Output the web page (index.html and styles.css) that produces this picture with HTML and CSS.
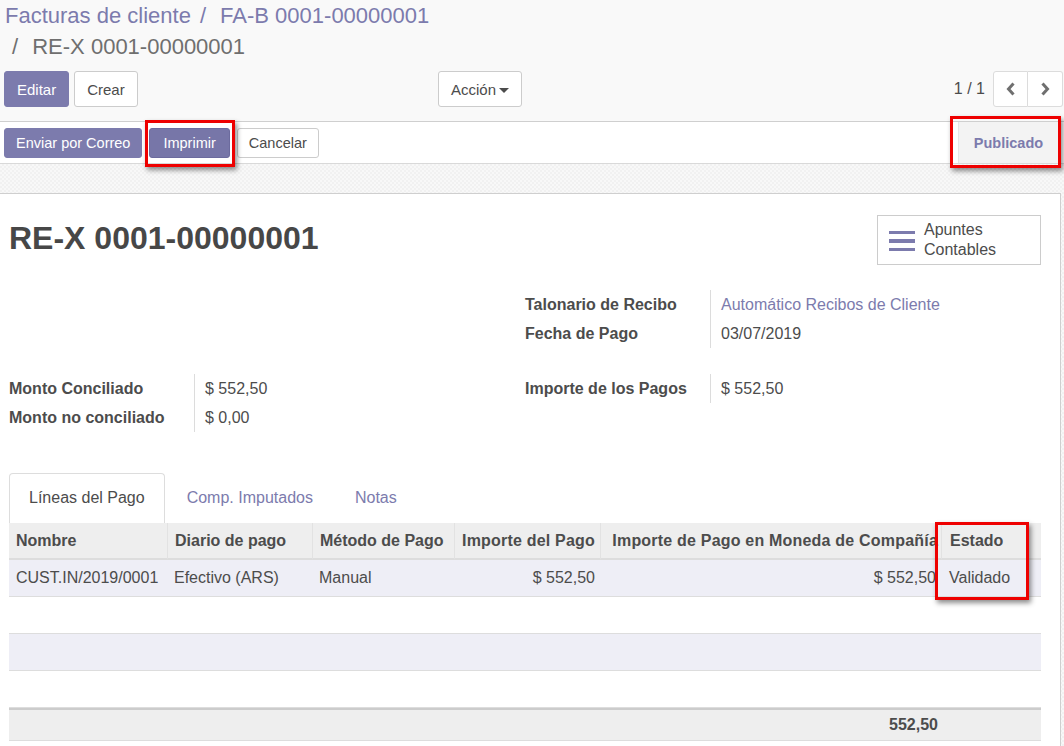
FILE: index.html
```html
<!DOCTYPE html>
<html lang="es">
<head>
<meta charset="utf-8">
<title>RE-X 0001-00000001</title>
<link rel="stylesheet" href="styles.css">
</head>
<body>
<div class="page">
  <header class="cp">
    <ol class="breadcrumb"><li><a href="#">Facturas de cliente</a></li><li><a href="#">FA-B 0001-00000001</a></li><li class="active">RE-X 0001-00000001</li></ol>
    <div class="cp-bottom">
      <div class="cp-buttons">
        <button class="btn btn-primary">Editar</button>
        <button class="btn btn-secondary">Crear</button>
      </div>
      <div class="cp-sidebar">
        <button class="btn btn-secondary">Acción<span class="caret"></span></button>
      </div>
      <div class="pager">
        <span class="pager-value">1 / 1</span>
        <div class="pager-buttons">
          <button class="btn pager-btn" aria-label="Anterior"><svg width="10" height="14" viewBox="0 0 10 14"><polyline points="7.5,1.5 2.5,7 7.5,12.5" fill="none" stroke="#6f6f6f" stroke-width="3" stroke-linejoin="miter"/></svg></button>
          <button class="btn pager-btn" aria-label="Siguiente"><svg width="10" height="14" viewBox="0 0 10 14"><polyline points="2.5,1.5 7.5,7 2.5,12.5" fill="none" stroke="#6f6f6f" stroke-width="3" stroke-linejoin="miter"/></svg></button>
        </div>
      </div>
    </div>
  </header>

  <div class="statusbar">
    <div class="sb-buttons">
      <button class="btn btn-primary btn-sm">Enviar por Correo</button>
      <button class="btn btn-primary btn-sm btn-print">Imprimir</button>
      <button class="btn btn-secondary btn-sm">Cancelar</button>
    </div>
    <div class="sb-status"><span class="status-active">Publicado</span></div>
  </div>

  <div class="sheet-bg">
    <div class="sheet">
      <div class="sheet-head">
        <h1 class="title">RE-X 0001-00000001</h1>
        <button class="btn-box">
          <span class="burger"><i></i><i></i><i></i></span>
          <span class="box-text">Apuntes<br>Contables</span>
        </button>
      </div>

      <div class="group group-first">
        <div class="gcol"></div>
        <div class="gcol">
          <div class="fields">
            <div class="lbl">Talonario de Recibo</div>
            <div class="val"><a href="#">Automático Recibos de Cliente</a></div>
            <div class="lbl">Fecha de Pago</div>
            <div class="val">03/07/2019</div>
          </div>
        </div>
      </div>

      <div class="group group-second">
        <div class="gcol">
          <div class="fields">
            <div class="lbl">Monto Conciliado</div>
            <div class="val">$ 552,50</div>
            <div class="lbl">Monto no conciliado</div>
            <div class="val">$ 0,00</div>
          </div>
        </div>
        <div class="gcol">
          <div class="fields">
            <div class="lbl">Importe de los Pagos</div>
            <div class="val">$ 552,50</div>
          </div>
        </div>
      </div>

      <ul class="tabs">
        <li class="tab active">Líneas del Pago</li>
        <li class="tab"><a href="#">Comp. Imputados</a></li>
        <li class="tab"><a href="#">Notas</a></li>
      </ul>

      <table class="lines">
        <colgroup>
          <col class="c1"><col class="c2"><col class="c3"><col class="c4"><col class="c5"><col class="c6">
        </colgroup>
        <thead>
          <tr>
            <th>Nombre</th>
            <th>Diario de pago</th>
            <th>Método de Pago</th>
            <th class="num h-pago">Importe del Pago</th>
            <th class="num h-moneda">Importe de Pago en Moneda de Compañía</th>
            <th class="last">Estado</th>
          </tr>
        </thead>
        <tbody>
          <tr class="odd">
            <td>CUST.IN/2019/0001</td>
            <td>Efectivo (ARS)</td>
            <td>Manual</td>
            <td class="num">$ 552,50</td>
            <td class="num">$ 552,50</td>
            <td class="last">Validado</td>
          </tr>
          <tr class="empty"><td colspan="6"></td></tr>
          <tr class="empty odd"><td colspan="6"></td></tr>
          <tr class="empty"><td colspan="6"></td></tr>
        </tbody>
        <tfoot>
          <tr>
            <td></td><td></td><td></td><td></td>
            <td class="num total">552,50</td>
            <td></td>
          </tr>
        </tfoot>
      </table>
    </div>
  </div>

  <div class="mark mark-imprimir"></div>
  <div class="mark mark-publicado"></div>
  <div class="mark mark-estado"></div>
</div>
</body>
</html>
```

FILE: styles.css
```css
* { box-sizing: border-box; }
html, body { margin: 0; padding: 0; }
body {
  font-family: "Liberation Sans", Arial, Helvetica, sans-serif;
  font-size: 16px;
  color: #4c4c4c;
  background: #fff;
}
a { color: #7c7bad; text-decoration: none; }

.page { position: relative; width: 1064px; height: 746px; overflow: hidden; }

/* control panel */
.cp {
  background: #f9f9f9;
  border-bottom: 1px solid #cfcfcf;
  padding-bottom: 14px;
}
.breadcrumb {
  list-style: none;
  margin: 0;
  padding: 0 0 0 5px;
  max-width: 532px;
  font-size: 22px;
  line-height: 31px;
}
.breadcrumb li { display: inline-block; white-space: nowrap; }
.breadcrumb li + li::before { content: "/\00a0"; padding: 0 8px 0 9px; color: #7c7bad; }
.breadcrumb li.active { color: #6f6f6f; }
.breadcrumb li.active::before { color: #6f6f6f; padding-left: 7px; }

.cp-bottom {
  display: grid;
  grid-template-columns: 434px 1fr auto;
  align-items: center;
  margin-top: 9px;
  padding-left: 4px;
}
.cp-buttons { display: flex; gap: 5px; }

.btn {
  font-family: inherit;
  font-size: 15px;
  height: 36px;
  padding: 0 12px;
  border: 1px solid #ccc;
  border-radius: 3px;
  background: #fff;
  color: #4c4c4c;
  display: inline-flex;
  align-items: center;
  cursor: pointer;
}
.btn-primary { background: #7c7bad; border-color: #7c7bad; color: #fff; }
.btn-sm { height: 30px; font-size: 14.5px; padding: 0 11px; }
.btn-print { padding: 0 13px; background: #7776a8; border-color: #6c6b9e; }
.caret {
  display: inline-block;
  width: 0; height: 0;
  border-left: 5px solid transparent;
  border-right: 5px solid transparent;
  border-top: 5px solid #4c4c4c;
  margin-left: 3px;
  margin-top: 2px;
}

.pager { display: flex; align-items: center; gap: 8px; padding-right: 1px; }
.pager-value { font-size: 16px; }
.pager-buttons { display: flex; }
.pager-btn { width: 35px; padding: 0; justify-content: center; border-color: #dcdcdc; }
.pager-btn:first-child { border-radius: 3px 0 0 3px; }
.pager-btn + .pager-btn { border-left: none; border-radius: 0 3px 3px 0; }

/* status bar */
.statusbar {
  height: 42px;
  background: #fff;
  border-bottom: 1px solid #d9d9d9;
  display: flex;
  align-items: center;
  justify-content: space-between;
  padding-left: 4px;
}
.sb-buttons { display: flex; gap: 7px; }
.sb-status { align-self: stretch; margin-right: 6px; display: flex; }
.status-active {
  width: 100px;
  display: flex;
  align-items: center;
  justify-content: center;
  background: #f3f3f3;
  border-left: 1px solid #e6e6e6;
  color: #7c7bad;
  font-weight: bold;
  font-size: 14.5px;
}

/* sheet */
.sheet-bg {
  padding-top: 29px;
  background-color: #f5f5f5;
  background-image: repeating-conic-gradient(#f1f1f1 0 25%, #f8f8f8 0 50%);
  background-size: 4px 4px;
  height: 582px;
}
.sheet {
  width: 1061px;
  height: 100%;
  background: #fff;
  border-top: 1px solid #cfcfcf;
  border-right: 1px solid #cfcfcf;
  padding: 21px 19px 0 9px;
}
.sheet-head { display: flex; justify-content: space-between; align-items: flex-start; }
.title {
  margin: 4px 0 0;
  font-size: 32px;
  line-height: 38px;
  font-weight: bold;
  color: #474747;
}
.btn-box {
  width: 164px;
  height: 50px;
  background: #fff;
  border: 1px solid #ccc;
  display: flex;
  align-items: center;
  padding: 0 0 0 11px;
  font-family: inherit;
  font-size: 16px;
  color: #4c4c4c;
  text-align: left;
  cursor: pointer;
}
.burger { display: flex; flex-direction: column; gap: 5px; width: 26px; margin-right: 9px; margin-top: 2px; }
.burger i { display: block; height: 3.5px; background: #7c7bad; }
.box-text { line-height: 20px; }

.group { display: grid; grid-template-columns: 1fr 1fr; }
.group-first { margin-top: 25px; }
.group-second { margin-top: 26px; }
.fields { display: grid; grid-template-columns: 186px 1fr; }
.lbl {
  font-weight: bold;
  line-height: 21px;
  padding: 4px 0;
  border-right: 1px solid #dcdcdc;
}
.val { line-height: 21px; padding: 4px 10px; }

/* tabs */
.tabs { list-style: none; margin: 41px 0 0; padding: 0; display: flex; }
.tab {
  padding: 13px 19px 14px;
  line-height: 22px;
  margin-right: 2px;
  border: 1px solid transparent;
  border-bottom: none;
  border-radius: 4px 4px 0 0;
}
.tab.active { border-color: #dddddd; background: #fff; color: #4c4c4c; }

/* table */
.lines {
  width: 1032px;
  table-layout: fixed;
  border-collapse: separate;
  border-spacing: 0;
}
.c1 { width: 158px; } .c2 { width: 145px; } .c3 { width: 142px; }
.c4 { width: 146px; } .c5 { width: 341px; } .c6 { width: 100px; }
.lines th, .lines td { box-sizing: content-box; white-space: nowrap; overflow: hidden; }
.lines th {
  height: 35px;
  padding: 0 7px;
  background: #eeeeee;
  border-bottom: 2px solid #dddddd;
  font-weight: bold;
  text-align: left;
  text-overflow: clip;
}
.lines th + th { border-left: 1px solid #e2e2e2; }
.lines td {
  height: 36px;
  padding: 0 7px;
  border-bottom: 1px solid #dddddd;
}
.lines tr.odd td { background: #eeeef6; }
.lines .num { text-align: right; padding-right: 5px; }
.lines th.h-pago { padding-right: 6px; letter-spacing: 0.2px; }
.lines th.h-moneda { padding-right: 3px; letter-spacing: 0.2px; }
.lines .last { padding-left: 8px; }
.lines tfoot td {
  height: 30px;
  background: #eeeeee;
  border-top: 2px solid #cccccc;
  border-bottom: 1px solid #dddddd;
}
.lines tfoot .total { font-weight: bold; padding-right: 3px; }

/* annotation boxes */
.mark {
  position: absolute;
  border: 3px solid #ee0000;
  box-shadow: 2px 3px 5px rgba(0, 0, 0, 0.45);
  pointer-events: none;
}
.mark-imprimir { left: 145px; top: 120px; width: 90px; height: 47px; }
.mark-publicado { left: 950px; top: 116px; width: 111px; height: 52px; }
.mark-estado { left: 935px; top: 522px; width: 94px; height: 78px; }
```
